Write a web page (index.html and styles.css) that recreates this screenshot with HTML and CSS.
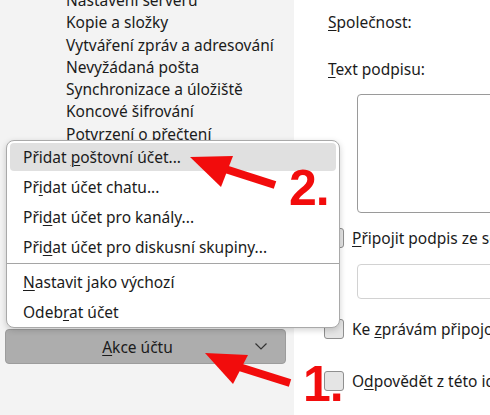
FILE: index.html
```html
<!DOCTYPE html>
<html lang="cs">
<head>
    <meta charset="UTF-8">
    <title>Nastavení účtů</title>
    <link rel="stylesheet" href="styles.css">
</head>
<body>
    <div class="window">
        <div class="sidebar">
            <ul class="tree">
                <li>Nastavení serveru</li>
                <li>Kopie a složky</li>
                <li>Vytváření zpráv a adresování</li>
                <li>Nevyžádaná pošta</li>
                <li>Synchronizace a úložiště</li>
                <li>Koncové šifrování</li>
                <li>Potvrzení o přečtení</li>
            </ul>
            <button class="account-actions">
                <span class="label"><u>A</u>kce účtu</span>
                <svg class="chevron" width="12" height="7" viewBox="0 0 12 7"><polyline points="0.5,0.5 6,6 11.5,0.5" fill="none" stroke="#333" stroke-width="1.2"/></svg>
            </button>
        </div>
        <div class="content">
            <div class="field-label"><u>S</u>polečnost:</div>
            <div class="field-label second"><u>T</u>ext podpisu:</div>
            <div class="signature-box"></div>
            <div class="check-row first"><span class="checkbox"></span><span><u>P</u>řipojit podpis ze souboru</span></div>
            <div class="file-input"></div>
            <div class="check-row second"><span class="checkbox"></span><span>Ke <u>z</u>právám připojovat vizitku</span></div>
            <div class="check-row third"><span class="checkbox"></span><span>O<u>d</u>povědět z této identity</span></div>
        </div>
    </div>

    <div class="popup-menu">
        <div class="menu-item active">Přidat <u>p</u>oštovní účet...</div>
        <div class="menu-item">Př<u>i</u>dat účet chatu...</div>
        <div class="menu-item">Při<u>d</u>at účet pro kanály...</div>
        <div class="menu-item">Při<u>d</u>at účet pro diskusní skupiny...</div>
        <div class="menu-separator"></div>
        <div class="menu-item"><u>N</u>astavit jako výchozí</div>
        <div class="menu-item">Odeb<u>r</u>at účet</div>
    </div>

    <!-- annotation arrows -->
    <svg class="annotations" width="490" height="415" viewBox="0 0 490 415">
        <line x1="275" y1="185" x2="222" y2="168" stroke="#f20c0c" stroke-width="8"/>
        <polygon points="190,157 233,156 221,187" fill="#f20c0c"/>
        <line x1="290" y1="383" x2="236" y2="366" stroke="#f20c0c" stroke-width="8"/>
        <polygon points="205,353 248,355 233,384" fill="#f20c0c"/>
    </svg>
    <div class="step step-two">2.</div>
    <div class="step step-one">1.</div>
</body>
</html>
```

FILE: styles.css
```css
:root {
    --text-color: #1b1b1b;
    --panel-color: #f3f3f3;
    --mark-color: #f20c0c;
}

body {
    margin: 0;
    font-family: 'Noto Sans', sans-serif;
    font-size: 15.5px;
    color: var(--text-color);
    background: #ffffff;
    overflow: hidden;
}

u {
    text-decoration-thickness: 1px;
    text-underline-offset: 2px;
}

.window {
    display: flex;
    height: 415px;
}

.sidebar {
    width: 294px;
    background: var(--panel-color);
    display: flex;
    flex-direction: column;
    padding: 0 0 51px 5px;
    box-sizing: border-box;
    flex-shrink: 0;
}

.tree {
    list-style: none;
    margin: -11px 0 0 0;
    padding: 0 0 0 61px;
    line-height: 22.3px;
}

.account-actions {
    margin-top: auto;
    width: 281px;
    height: 35px;
    background: #adadad;
    border: 1px solid #9c9c9c;
    border-radius: 4px;
    display: flex;
    align-items: center;
    padding: 0 18px 0 14px;
    font-family: inherit;
    font-size: 15.5px;
    color: var(--text-color);
}

.account-actions .label {
    flex: 1;
    text-align: center;
}

.content {
    flex: 1;
    padding-left: 30px;
    overflow: hidden;
}

.field-label {
    margin: 11px 0 0 4px;
    line-height: 22px;
}

.field-label.second {
    margin-top: 25px;
}

.signature-box {
    margin: 14px 0 0 33px;
    height: 117px;
    width: 200px;
    border: 1px solid #9a9a9a;
    border-radius: 4px;
    background: #fff;
}

.check-row {
    display: flex;
    align-items: center;
    gap: 8px;
    height: 21px;
    white-space: nowrap;
}

.check-row.first { margin-top: 14px; }
.check-row.second { margin-top: 19px; }
.check-row.third { margin-top: 31px; }

.checkbox {
    width: 18px;
    height: 18px;
    border: 1px solid #8f8f8f;
    border-radius: 3px;
    background: #e5e5e5;
    flex-shrink: 0;
}

.file-input {
    margin: 16px 0 0 33px;
    height: 33px;
    width: 200px;
    border: 1px solid #d2d2d2;
    border-radius: 4px;
}

.popup-menu {
    position: absolute;
    left: 6px;
    top: 140px;
    width: 332px;
    background: #fff;
    border: 1px solid #a9a9a9;
    border-radius: 8px;
    box-shadow: 0 2px 6px rgba(0,0,0,0.18);
    padding: 1px 0 0 0;
    display: flex;
    flex-direction: column;
}

.menu-item {
    height: 28px;
    line-height: 28px;
    margin: 1px 3px;
    padding-left: 13px;
    border-radius: 4px;
    white-space: nowrap;
}

.menu-item.active {
    background: #e0e0e0;
}

.menu-separator {
    height: 1px;
    background: #a5a5a5;
    margin: 1px 0 3px 0;
}

.annotations {
    position: absolute;
    left: 0;
    top: 0;
    pointer-events: none;
}

.step {
    position: absolute;
    font-family: 'Liberation Sans', sans-serif;
    font-weight: bold;
    font-size: 50px;
    line-height: 1;
    color: var(--mark-color);
    letter-spacing: -1px;
}

.step-two {
    left: 289px;
    top: 163px;
}

.step-one {
    left: 303px;
    top: 359px;
}
```
